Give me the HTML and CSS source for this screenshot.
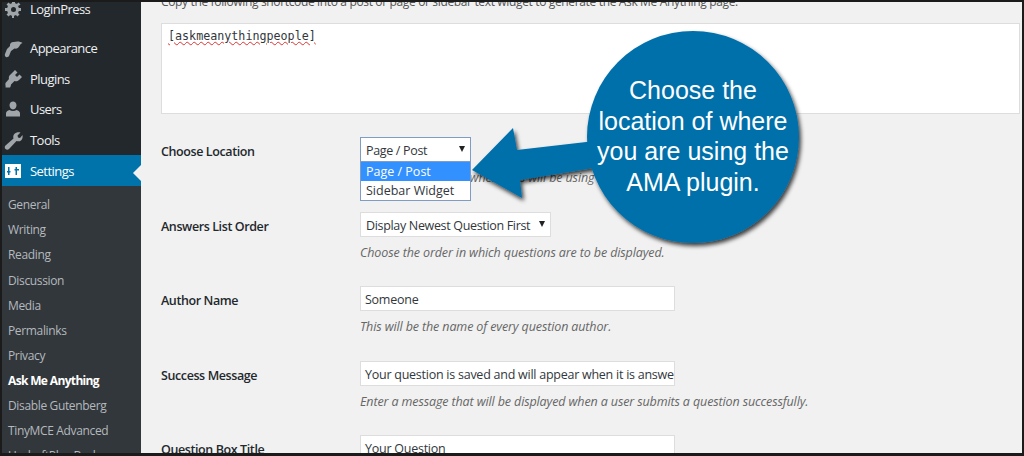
FILE: index.html
```html
<!DOCTYPE html>
<html lang="en">
<head>
<meta charset="utf-8">
<title>Ask Me Anything settings</title>
<link rel="stylesheet" href="styles.css">
</head>
<body>
<div class="frame">
  <aside class="sidebar">
    <ul class="menu">
      <li class="item first"><svg class="ico" viewBox="0 0 20 20"><path d="M18 12h-2.180c-.2.7-.4 1.300-.8 1.900l1.500 1.500-2.100 2.100-1.500-1.500c-.6.4-1.200.6-1.900.8V19H9v-2.200c-.7-.2-1.300-.4-1.900-.8l-1.500 1.500-2.100-2.100 1.500-1.500c-.4-.6-.6-1.200-.8-1.900H2V9h2.200c.2-.7.4-1.300.8-1.900L3.500 5.600l2.100-2.100 1.500 1.500c.6-.4 1.200-.6 1.900-.8V2h3v2.200c.7.2 1.300.4 1.900.8l1.500-1.500 2.100 2.100L15 7.100c.4.6.6 1.200.8 1.900H18v3zM10.500 8a2.500 2.500 0 100 5 2.500 2.500 0 000-5z"/></svg>LoginPress</li>
      <li class="item sep"><svg class="ico" viewBox="0 0 20 20"><path d="M14.500 3.500c2 0 3.500.5 5 1.500-1.500.5-2.500 1.500-3 3-1 2-3 3-5 2.500L8 13l-2 5c-.5 1-2 1.500-3 1-1-.6-1.500-1.800-1-3l2-5 3-3C6.500 6 8 4 10.500 4c1.300-.2 2.700-.5 4-.5z"/></svg>Appearance</li>
      <li class="item"><svg class="ico" viewBox="0 0 20 20"><path d="M13 2l2.500 2.500L13 7l2 2 2.500-2.500L20 9l-3 3c-1.500 1.500-3 1.500-4.500 1L9 16.500c0 .8-.5 2.500-1 3H3.500c.5-.5-.5-3 0-4.500L7 11c-.5-1.500 0-3 1-4l5-5z" transform="translate(-1 -1)"/></svg>Plugins</li>
      <li class="item"><svg class="ico" viewBox="0 0 20 20"><path d="M10 2.500c2 0 3.500 1.700 3.500 3.800S12 10.500 10 10.500 6.500 8.400 6.500 6.300 8 2.500 10 2.500zM3 17.500v-3.300c0-1.500 1.500-2.700 3.500-3.200 1 .7 2.200 1 3.500 1s2.500-.3 3.500-1c2 .5 3.500 1.700 3.500 3.200v3.300H3z"/></svg>Users</li>
      <li class="item"><svg class="ico" viewBox="0 0 20 20"><path d="M17.500 2.500l-3 3 .5 2 2 .5 2.500-3c.5 2.500-.2 4.500-1.500 5.500-1.300 1-3 1-4.500.5L6 19c-1 1-2.500 1-3.500 0s-1-2.500 0-3.500l8-7c-.5-1.500-.3-3.200.8-4.500 1.500-1.500 3.700-2 6.200-1.500z"/></svg>Tools</li>
      <li class="item current"><svg class="ico" viewBox="0 0 20 20"><path d="M2 3h16v14H2V3zm3 3v4H4v1.500h1V14h1.500v-2.500h1V10h-1V6H5zm7.500 0v2h-1v1.500h1V14H14V9.500h2V8h-2V6h-1.500z"/></svg>Settings</li>
    </ul>
    <ul class="submenu">
      <li>General</li>
      <li>Writing</li>
      <li>Reading</li>
      <li>Discussion</li>
      <li>Media</li>
      <li>Permalinks</li>
      <li>Privacy</li>
      <li class="active">Ask Me Anything</li>
      <li>Disable Gutenberg</li>
      <li>TinyMCE Advanced</li>
      <li>UpdraftPlus Backups</li>
    </ul>
  </aside>
  <main class="content">
    <p class="intro">Copy the following shortcode into a post or page or sidebar text widget to generate the Ask Me Anything page.</p>
    <div class="shortcode"><span class="misspelt">[askmeanythingpeople]</span></div>
    <div class="row">
      <div class="label">Choose Location</div>
      <div class="field">
        <div class="select open">Page / Post<span class="caret"></span>
          <ul class="options">
            <li class="picked">Page / Post</li>
            <li>Sidebar Widget</li>
          </ul>
        </div>
        <p class="hint">Choose the location where this will be using the plugin.</p>
      </div>
    </div>
    <div class="row">
      <div class="label">Answers List Order</div>
      <div class="field">
        <div class="select wide">Display Newest Question First<span class="caret"></span></div>
        <p class="hint">Choose the order in which questions are to be displayed.</p>
      </div>
    </div>
    <div class="row">
      <div class="label">Author Name</div>
      <div class="field">
        <div class="input">Someone</div>
        <p class="hint">This will be the name of every question author.</p>
      </div>
    </div>
    <div class="row">
      <div class="label">Success Message</div>
      <div class="field">
        <div class="input">Your question is saved and will appear when it is answered.</div>
        <p class="hint">Enter a message that will be displayed when a user submits a question successfully.</p>
      </div>
    </div>
    <div class="row">
      <div class="label">Question Box Title</div>
      <div class="field">
        <div class="input">Your Question</div>
      </div>
    </div>
  </main>
  <div class="callout">
    <svg class="callout-art" viewBox="0 0 340 230" aria-hidden="true">
      <defs>
        <filter id="drop" x="-10%" y="-10%" width="125%" height="125%">
          <feDropShadow dx="2" dy="3" stdDeviation="2" flood-color="#000" flood-opacity=".75"/>
        </filter>
      </defs>
      <g filter="url(#drop)" fill="#046fab">
        <polygon points="2,144 43,102 47,124 125,115 130,141 50,154 52,172"/>
        <circle cx="223" cy="111" r="106"/>
      </g>
    </svg>
    <div class="callout-text">Choose the<br>location of where<br>you are using the<br>AMA plugin.</div>
  </div>
</div>
</body>
</html>
```
FILE: styles.css
```css
* { box-sizing: border-box; }
html, body { margin: 0; height: 456px; overflow: hidden; }
body { font-family: "Open Sans", "Noto Sans", sans-serif; font-size: 12.5px; color: #32373c; background: #f1f1f1; }
ul { list-style: none; margin: 0; padding: 0; }
p { margin: 0; }

.frame { position: relative; display: flex; width: 1024px; height: 456px; overflow: hidden; border: solid #1b1b1b; border-width: 2px 2px 3px 2px; background: #f1f1f1; }

.sidebar { flex: 0 0 139px; background: #23282d; color: #eee; overflow: hidden; }
.item { display: flex; align-items: center; height: 30.6px; padding-left: 1px; letter-spacing: -.55px; color: #eef0f1; font-size: 13px; }
.item.first { height: 13px; }
.item.sep { margin-top: 18px; }
.ico { width: 20px; height: 20px; margin-right: 7px; flex: none; fill: #a0a5aa; }
.item.current { background: #0073aa; color: #fff; position: relative; height: 31px; }
.item.current .ico { fill: #fff; }
.item.current::after { content: ""; position: absolute; right: 0; top: 10px; border: 8px solid transparent; border-right-color: #f1f1f1; border-left-width: 0; }
.submenu { background: #32373c; padding: 6px 0 0 6px; color: #b4b9be; font-size: 12px; letter-spacing: -.35px; }
.submenu li { height: 25.050px; line-height: 25px; }
.submenu .active { color: #fff; font-weight: 700; letter-spacing: -.65px; }

.content { flex: 1; min-width: 0; padding: 0 0 0 20px; overflow: hidden; }
.intro { height: 21px; margin-top: -9px; line-height: 18px; font-size: 12px; letter-spacing: -.35px; color: #555; white-space: nowrap; }
.shortcode { height: 91px; margin: 9px 2px 0 0; padding: 4px 6px; background: #fff; border: 1px solid #ddd; font-family: "DejaVu Sans Mono", "Liberation Mono", monospace; font-size: 11.7px; line-height: 16px; color: #32373c; }
.misspelt { text-decoration: underline wavy #d33; text-decoration-thickness: 1px; }

.row { display: flex; height: 74.500px; }
.shortcode + .row { margin-top: 23px; }
.label { flex: 0 0 199px; padding-top: 6px; line-height: 18px; font-weight: 600; font-size: 12.5px; letter-spacing: -.4px; color: #23282d; }
.field { flex: 1; min-width: 0; }

.select { position: relative; width: 111px; height: 25px; padding: 1px 5px 0; line-height: 24px; background: #fff; border: 1px solid #ddd; color: #32373c; letter-spacing: -.33px; white-space: nowrap; }
.select.open { border-color: #7e9cc4; }
.select.wide { width: 191px; }
.caret { position: absolute; right: 5px; top: 8px; border: 3.500px solid transparent; border-top: 6px solid #222; border-bottom-width: 0; }
.options { position: absolute; left: -1px; top: 23px; width: 111px; background: #fff; border: 1px solid #7e9cc4; line-height: 20px; letter-spacing: 0; z-index: 1; }
.options li { padding-left: 5px; height: 19px; }
.options .picked { background: #3390ff; color: #fff; }

.input { width: 315px; height: 25px; padding: 1px 4px 0; line-height: 24px; background: #fff; border: 1px solid #ddd; color: #32373c; letter-spacing: -.25px; white-space: nowrap; overflow: hidden; }
.hint { margin-top: 5px; line-height: 21px; font-style: italic; font-size: 12.500px; letter-spacing: -.12px; color: #666; white-space: nowrap; }

.callout { position: absolute; left: 468px; top: 24px; width: 340px; height: 230px; }
.callout-art { display: block; width: 340px; height: 230px; }
.callout-text { position: absolute; left: 116px; top: 49px; width: 214px; text-align: center; color: #fff; font-family: "Liberation Sans", Arial, sans-serif; font-size: 25px; line-height: 30.500px; white-space: nowrap; }
```
